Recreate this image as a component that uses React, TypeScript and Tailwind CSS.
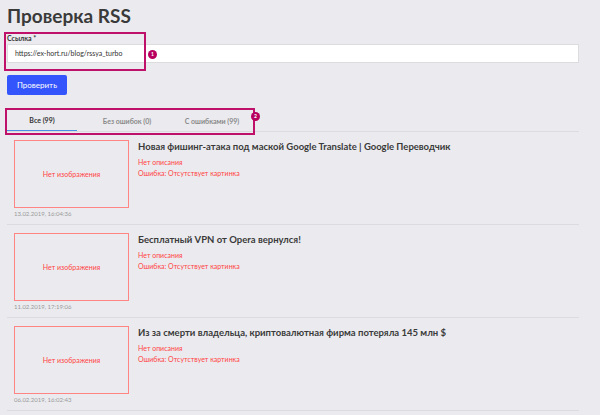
import React from "react";

const items = [
  { title: "Новая фишинг-атака под маской Google Translate | Google Переводчик", date: "13.02.2019, 16:04:36" },
  { title: "Бесплатный VPN от Opera вернулся!", date: "11.02.2019, 17:19:06" },
  { title: "Из за смерти владельца, криптовалютная фирма потеряла 145 млн $", date: "06.02.2019, 16:02:43" },
];

const tabs = [
  { label: "Все (99)", w: "w-[70px]", active: true },
  { label: "Без ошибок (0)", w: "w-[100px]", active: false },
  { label: "С ошибками (99)", w: "w-[70px]", active: false },
];

const Badge = ({ n, className }: { n: number; className: string }) => (
  <div className={`absolute w-[9px] h-[9px] rounded-full bg-[#b8005f] text-white text-[5px] font-bold flex items-center justify-center ${className}`}>
    {n}
  </div>
);

export default function App() {
  return (
    <div className="relative w-[600px] h-[415px] overflow-hidden bg-[#ebebef] font-['Lato',sans-serif] text-[#333]">
      <div className="pl-[7px] pr-[21px] pt-[4px]">
        <h1 className="text-[19px] leading-[24px] font-bold text-[#3a3a3a]">Проверка RSS</h1>

        {/* url field */}
        <div className="mt-[6px]">
          <p className="text-[7px] leading-[9px] font-bold text-[#333]">Ссылка *</p>
          <div className="mt-[1px] h-[19px] bg-white border border-[#dcdcdf] flex items-center pl-[7px] text-[7px] text-[#333]">
            https://ex-hort.ru/blog/rssya_turbo
          </div>
        </div>

        <button className="mt-[12px] h-[20px] w-[60px] bg-[#3455fb] rounded-[2px] text-white text-[8px] flex items-center justify-center">
          Проверить
        </button>

        {/* tabs */}
        <div className="mt-[16px] flex border-b border-[#dcdcdf] h-[21px] items-stretch">
          {tabs.map((t) => (
            <div
              key={t.label}
              className={`flex items-center justify-center text-[7px] font-bold ${t.w} ${
                t.active ? "text-[#333] border-b-[1.5px] border-[#4a8ee8]" : "text-[#8a8a8a]"
              }`}
            >
              {t.label}
            </div>
          ))}
        </div>

        {/* list */}
        <div className="flex flex-col">
          {items.map((it) => (
            <div key={it.date} className="border-b border-[#dcdcdf] pt-[8px] pb-[6px] pl-[7px]">
              <div className="flex">
                <div className="w-[115px] h-[68px] border border-[#ff8585] flex items-center justify-center text-[7px] text-[#ff4343] shrink-0">
                  Нет изображения
                </div>
                <div className="ml-[9px] pt-[1px]">
                  <p className="text-[9.5px] leading-[12px] font-bold text-[#3a3a3a]">{it.title}</p>
                  <p className="mt-[4px] text-[7px] leading-[10px] text-[#ff4343]">Нет описания</p>
                  <p className="mt-[1px] text-[7px] leading-[10px] text-[#ff4343]">Ошибка: Отсутствует картинка</p>
                </div>
              </div>
              <p className="mt-[2px] text-[6px] leading-[8px] text-[#9a9a9a]">{it.date}</p>
            </div>
          ))}
        </div>
      </div>

      {/* annotation overlays */}
      <div className="absolute left-[4px] top-[32px] w-[142px] h-[39px] border-2 border-[#c0116a]" />
      <Badge n={1} className="left-[148px] top-[50px]" />
      <div className="absolute left-[5px] top-[108px] w-[250px] h-[27px] border-2 border-[#c0116a]" />
      <Badge n={2} className="left-[251px] top-[112px]" />
    </div>
  );
}
